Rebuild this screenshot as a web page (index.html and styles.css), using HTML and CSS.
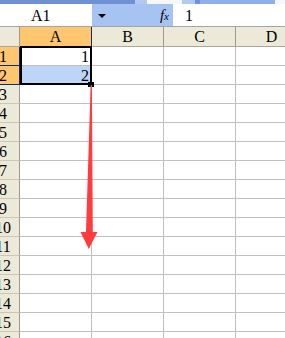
FILE: index.html
```html
<!DOCTYPE html>
<html lang="en">

<head>
  <meta charset="UTF-8">
  <title>Sheet</title>
  <link rel="stylesheet" href="styles.css">
</head>

<body>
  <div class="topstrip">
    <span class="seg seg-blue w135"></span>
    <span class="seg seg-light w12"></span>
    <span class="seg seg-white w3"></span>
    <span class="seg seg-white w32"></span>
    <span class="seg seg-light w13"></span>
    <span class="seg seg-blue w5"></span>
    <span class="seg seg-mid w75"></span>
    <span class="seg seg-white w10"></span>
  </div>

  <div class="formula-bar">
    <div class="name-box">A1</div>
    <div class="name-drop">
      <span class="tri"></span>
      <span class="fx">f<small>x</small></span>
    </div>
    <div class="formula-input">1</div>
  </div>

  <div class="sheet">
    <div class="grid">
      <div class="corner"></div>
      <div class="col-head sel">A</div>
      <div class="col-head">B</div>
      <div class="col-head">C</div>
      <div class="col-head">D</div>

      <div class="row-head sel">1</div>
      <div class="cell active">1</div><div class="cell"></div><div class="cell"></div><div class="cell"></div>
      <div class="row-head sel">2</div>
      <div class="cell picked">2</div><div class="cell"></div><div class="cell"></div><div class="cell"></div>
      <div class="row-head">3</div>
      <div class="cell"></div><div class="cell"></div><div class="cell"></div><div class="cell"></div>
      <div class="row-head">4</div>
      <div class="cell"></div><div class="cell"></div><div class="cell"></div><div class="cell"></div>
      <div class="row-head">5</div>
      <div class="cell"></div><div class="cell"></div><div class="cell"></div><div class="cell"></div>
      <div class="row-head">6</div>
      <div class="cell"></div><div class="cell"></div><div class="cell"></div><div class="cell"></div>
      <div class="row-head">7</div>
      <div class="cell"></div><div class="cell"></div><div class="cell"></div><div class="cell"></div>
      <div class="row-head">8</div>
      <div class="cell"></div><div class="cell"></div><div class="cell"></div><div class="cell"></div>
      <div class="row-head">9</div>
      <div class="cell"></div><div class="cell"></div><div class="cell"></div><div class="cell"></div>
      <div class="row-head">10</div>
      <div class="cell"></div><div class="cell"></div><div class="cell"></div><div class="cell"></div>
      <div class="row-head">11</div>
      <div class="cell"></div><div class="cell"></div><div class="cell"></div><div class="cell"></div>
      <div class="row-head">12</div>
      <div class="cell"></div><div class="cell"></div><div class="cell"></div><div class="cell"></div>
      <div class="row-head">13</div>
      <div class="cell"></div><div class="cell"></div><div class="cell"></div><div class="cell"></div>
      <div class="row-head">14</div>
      <div class="cell"></div><div class="cell"></div><div class="cell"></div><div class="cell"></div>
      <div class="row-head">15</div>
      <div class="cell"></div><div class="cell"></div><div class="cell"></div><div class="cell"></div>
      <div class="row-head">16</div>
      <div class="cell"></div><div class="cell"></div><div class="cell"></div><div class="cell"></div>
    </div>

    <!-- selection box + fill handle sit over the grid -->
    <div class="selection"></div>
    <div class="fill-handle"></div>

    <svg class="arrow" width="285" height="311" viewBox="0 0 285 311">
      <line x1="91.2" y1="58" x2="91.2" y2="75" stroke="#ff9aa0" stroke-width="1" />
      <polygon points="90.6,60 91.9,60 92.8,205 97.5,205 88.8,222 80.5,205 86,205" fill="#ff3b3e" />
    </svg>
  </div>
</body>

</html>
```

FILE: styles.css
```css
body {
  margin: 0;
  width: 285px;
  height: 338px;
  overflow: hidden;
  background-color: #ffffff;
  font-family: 'Liberation Serif', 'DejaVu Serif', serif;
  font-size: 16px;
  color: #000000;
}

.topstrip {
  display: flex;
  height: 4px;
  background-color: #7797d6;
}

.seg {
  display: block;
  height: 100%;
}

.seg-blue {
  background-color: #6f90d2;
}

.seg-light {
  background-color: #b4c9f2;
}

.seg-mid {
  background-color: #8eaee8;
}

.seg-white {
  background-color: #f4f7fd;
}

.w3 { width: 3px; }
.w5 { width: 5px; }
.w10 { width: 10px; }
.w12 { width: 12px; }
.w13 { width: 13px; }
.w32 { width: 32px; }
.w75 { width: 75px; }
.w135 { width: 135px; }

.formula-bar {
  display: flex;
  height: 22px;
  border-bottom: 1px solid #a3a3a3;
  line-height: 24px;
}

.name-box {
  width: 92px;
  padding-left: 31px;
  box-sizing: border-box;
  background-color: #ffffff;
}

.name-drop {
  width: 81px;
  box-sizing: border-box;
  display: flex;
  align-items: center;
  justify-content: space-between;
  padding: 0 4px 0 6px;
  background-color: #a7c3f1;
}

.tri {
  width: 0;
  height: 0;
  border-left: 4px solid transparent;
  border-right: 4px solid transparent;
  border-top: 4px solid #000000;
  margin-top: 1px;
}

.fx {
  font-family: 'Liberation Serif', serif;
  font-style: italic;
  font-size: 15px;
  line-height: 1;
}

.fx small {
  font-size: 11px;
}

.formula-input {
  flex: 1;
  padding-left: 12px;
}

.sheet {
  position: relative;
  overflow: hidden;
  height: 311px;
}

.grid {
  display: grid;
  grid-template-columns: 33px repeat(4, 72px);
  grid-template-rows: 20px;
  grid-auto-rows: 19px;
  margin-left: -13px;
}

.grid > div {
  box-sizing: border-box;
  border-right: 1px solid #c0c0c0;
  border-bottom: 1px solid #c0c0c0;
}

.corner,
.col-head,
.row-head {
  background-color: #ece9d8;
  text-align: center;
}

.grid > .corner,
.grid > .col-head {
  border-right-color: #9d9a8b;
  border-bottom-color: #aca899;
  line-height: 20px;
}

.grid > .row-head {
  border-right-color: #9d9a8b;
  border-bottom-color: #cbc7b8;
  line-height: 19px;
}

.grid > .col-head.sel,
.grid > .row-head.sel {
  background-color: #ffc670;
  border-right-color: #0b2a7a;
  border-bottom-color: #0b2a7a;
}

.cell {
  text-align: right;
  padding-right: 2px;
  line-height: 19px;
}

.cell.picked {
  background-color: #bdd6f7;
}

.selection {
  position: absolute;
  left: 20px;
  top: 19px;
  width: 72px;
  height: 39px;
  box-sizing: border-box;
  border: 2px solid #000000;
}

.fill-handle {
  position: absolute;
  left: 88px;
  top: 55px;
  width: 6px;
  height: 5px;
  background-color: #000000;
}

.arrow {
  position: absolute;
  left: 0;
  top: 0;
  pointer-events: none;
}
```
